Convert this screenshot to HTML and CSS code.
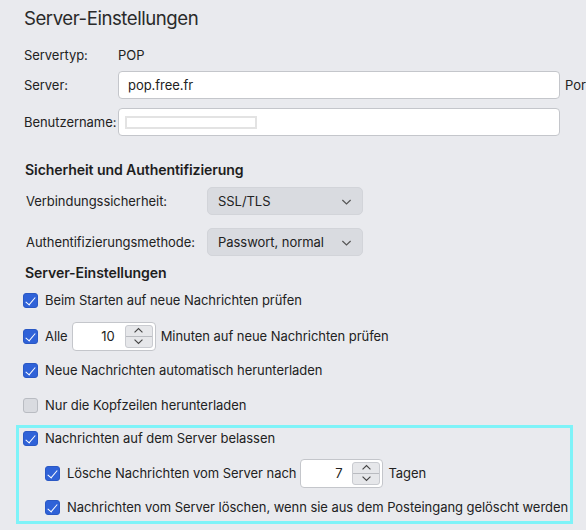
FILE: index.html
```html
<!DOCTYPE html>
<html lang="de">
<head>
<meta charset="utf-8">
<link rel="stylesheet" href="styles.css">
</head>
<body>
<div class="page">
  <div class="title">Server-Einstellungen</div>

  <div class="frow r-type">
    <span class="lbl">Servertyp:</span>
    <span class="val">POP</span>
  </div>
  <div class="frow r-server">
    <span class="lbl">Server:</span>
    <div class="input wide">pop.free.fr</div>
    <span class="port">Port:</span>
  </div>
  <div class="frow r-user">
    <span class="lbl">Benutzername:</span>
    <div class="input wide user"><span class="blank"></span></div>
  </div>

  <div class="heading h-sec">Sicherheit und Authentifizierung</div>
  <div class="srow s1">
    <span class="slbl">Verbindungssicherheit:</span>
    <div class="select">SSL/TLS<svg class="chev" viewBox="0 0 12 8"><path d="M1.5 1.8 L6 6.2 L10.5 1.8"/></svg></div>
  </div>
  <div class="srow s2">
    <span class="slbl">Authentifizierungsmethode:</span>
    <div class="select">Passwort, normal<svg class="chev" viewBox="0 0 12 8"><path d="M1.5 1.8 L6 6.2 L10.5 1.8"/></svg></div>
  </div>

  <div class="heading h-srv">Server-Einstellungen</div>

  <div class="crow c1"><span class="cb on"></span>Beim Starten auf neue Nachrichten prüfen</div>
  <div class="crow c2"><span class="cb on"></span>Alle
    <div class="spin s-min"><span class="num">10</span><span class="step"><span class="up"><svg viewBox="0 0 12 8"><path d="M1.5 6.2 L6 1.8 L10.5 6.2"/></svg></span><span class="dn"><svg viewBox="0 0 12 8"><path d="M1.5 1.8 L6 6.2 L10.5 1.8"/></svg></span></span></div>
    Minuten auf neue Nachrichten prüfen</div>
  <div class="crow c3"><span class="cb on"></span>Neue Nachrichten automatisch herunterladen</div>
  <div class="crow c4"><span class="cb"></span>Nur die Kopfzeilen herunterladen</div>

  <div class="hl">
    <div class="crow c5"><span class="cb on"></span>Nachrichten auf dem Server belassen</div>
    <div class="crow c6 sub"><span class="cb on"></span>Lösche Nachrichten vom Server nach
      <div class="spin s-days"><span class="num">7</span><span class="step"><span class="up"><svg viewBox="0 0 12 8"><path d="M1.5 6.2 L6 1.8 L10.5 6.2"/></svg></span><span class="dn"><svg viewBox="0 0 12 8"><path d="M1.5 1.8 L6 6.2 L10.5 1.8"/></svg></span></span></div>
      Tagen</div>
    <div class="crow c7 sub"><span class="cb on"></span>Nachrichten vom Server löschen, wenn sie aus dem Posteingang gelöscht werden</div>
  </div>
</div>
</body>
</html>
```
FILE: styles.css
```css
html, body {
  margin: 0;
  padding: 0;
  background: #e9eaee;
}
body {
  width: 586px;
  height: 530px;
  overflow: hidden;
  font-family: Inter, "Noto Sans", "Liberation Sans", sans-serif;
  font-size: 13px;
  letter-spacing: -0.05px;
  color: #222;
}
.page {
  display: flex;
  flex-direction: column;
  width: 586px;
}
.title {
  height: 36px;
  line-height: 36px;
  padding-left: 24px;
  font-size: 18.6px;
  letter-spacing: -0.45px;
  color: #2a2a2a;
}
.frow {
  display: flex;
  align-items: center;
  padding-left: 24px;
  white-space: nowrap;
}
.lbl {
  width: 94px;
  flex: none;
}
.r-type { margin-top: 9px; height: 20px; }
.r-server { margin-top: 6px; height: 28px; }
.r-user { margin-top: 9px; height: 28px; }
.input {
  box-sizing: border-box;
  height: 28px;
  background: #fff;
  border: 1px solid #c4c6cb;
  border-radius: 4px;
  display: flex;
  align-items: center;
  padding-left: 9px;
  flex: none;
}
.wide { width: 442px; }
.port { margin-left: 5px; }
.user { padding-left: 6px; }
.blank {
  width: 132px;
  height: 13px;
  border: 2px solid #e3e3e3;
  box-sizing: border-box;
  background: #fff;
}
.heading {
  padding-left: 25px;
  font-weight: 600;
  font-size: 14.1px;
  letter-spacing: -0.1px;
  height: 20px;
  line-height: 20px;
  color: #1e1e1e;
}
.h-sec { margin-top: 24px; }
.h-srv { margin-top: 7px; }
.srow {
  display: flex;
  align-items: center;
  padding-left: 26px;
  height: 28px;
}
.s1 { margin-top: 7px; }
.s2 { margin-top: 13px; }
.slbl { width: 181px; flex: none; }
.select {
  box-sizing: border-box;
  width: 156px;
  height: 28px;
  background: #d9dbe0;
  border: 1px solid #d2d4d9;
  border-radius: 5px;
  display: flex;
  align-items: center;
  padding-left: 10px;
  position: relative;
}
.chev {
  position: absolute;
  right: 10px;
  top: 10px;
  width: 11px;
  height: 8px;
  fill: none;
  stroke: #555;
  stroke-width: 1.3;
}
.crow {
  display: flex;
  align-items: center;
  padding-left: 23px;
  white-space: nowrap;
}
.cb {
  box-sizing: border-box;
  width: 15px;
  height: 15px;
  border-radius: 3px;
  margin-right: 7px;
  flex: none;
  background: #d9dbe0;
  border: 1px solid #b9bcc2;
  position: relative;
}
.cb.on {
  background: #2f62d8;
  border-color: #2a58c4;
}
.cb.on::after {
  content: "";
  position: absolute;
  left: 4px;
  top: 1px;
  width: 4px;
  height: 9px;
  border: solid #fff;
  border-width: 0 1.6px 1.6px 0;
  transform: rotate(40deg);
}
.c1 { margin-top: 2px; height: 30px; }
.c2 { margin-top: 6px; height: 30px; }
.c3 { margin-top: 4px; height: 30px; }
.c4 { margin-top: 5px; height: 30px; }
.spin {
  box-sizing: border-box;
  height: 29px;
  background: #fff;
  border: 1px solid #c4c6cb;
  border-radius: 4px;
  display: flex;
  align-items: stretch;
  margin: 0 5px 0 4px;
}
.s-min { width: 84px; }
.s-days { width: 83px; }
.num {
  flex: 1;
  display: flex;
  align-items: center;
  justify-content: flex-end;
  padding-right: 10px;
}
.step {
  width: 26px;
  margin: 2px 2px 2px 0;
  display: flex;
  flex-direction: column;
  border: 1px solid #c9cbd0;
  border-radius: 3px;
  background: #e6e7ea;
}
.step .up, .step .dn {
  flex: 1;
  display: flex;
  align-items: center;
  justify-content: center;
}
.step .up { border-bottom: 1px solid #b9bbc0; }
.step svg {
  width: 11px;
  height: 7px;
  fill: none;
  stroke: #444;
  stroke-width: 1.3;
}
.hl {
  margin: 5px 0 0 16px;
  width: 557px;
  height: 99px;
  box-sizing: border-box;
  border: 3px solid #7ef3f8;
  display: flex;
  flex-direction: column;
}
.hl .crow { padding-left: 4px; }
.hl .sub { padding-left: 26px; }
.c5 { height: 20px; margin-top: 0; }
.c6 { height: 30px; margin-top: 10px; }
.c7 { height: 26px; margin-top: 6px; }
```
